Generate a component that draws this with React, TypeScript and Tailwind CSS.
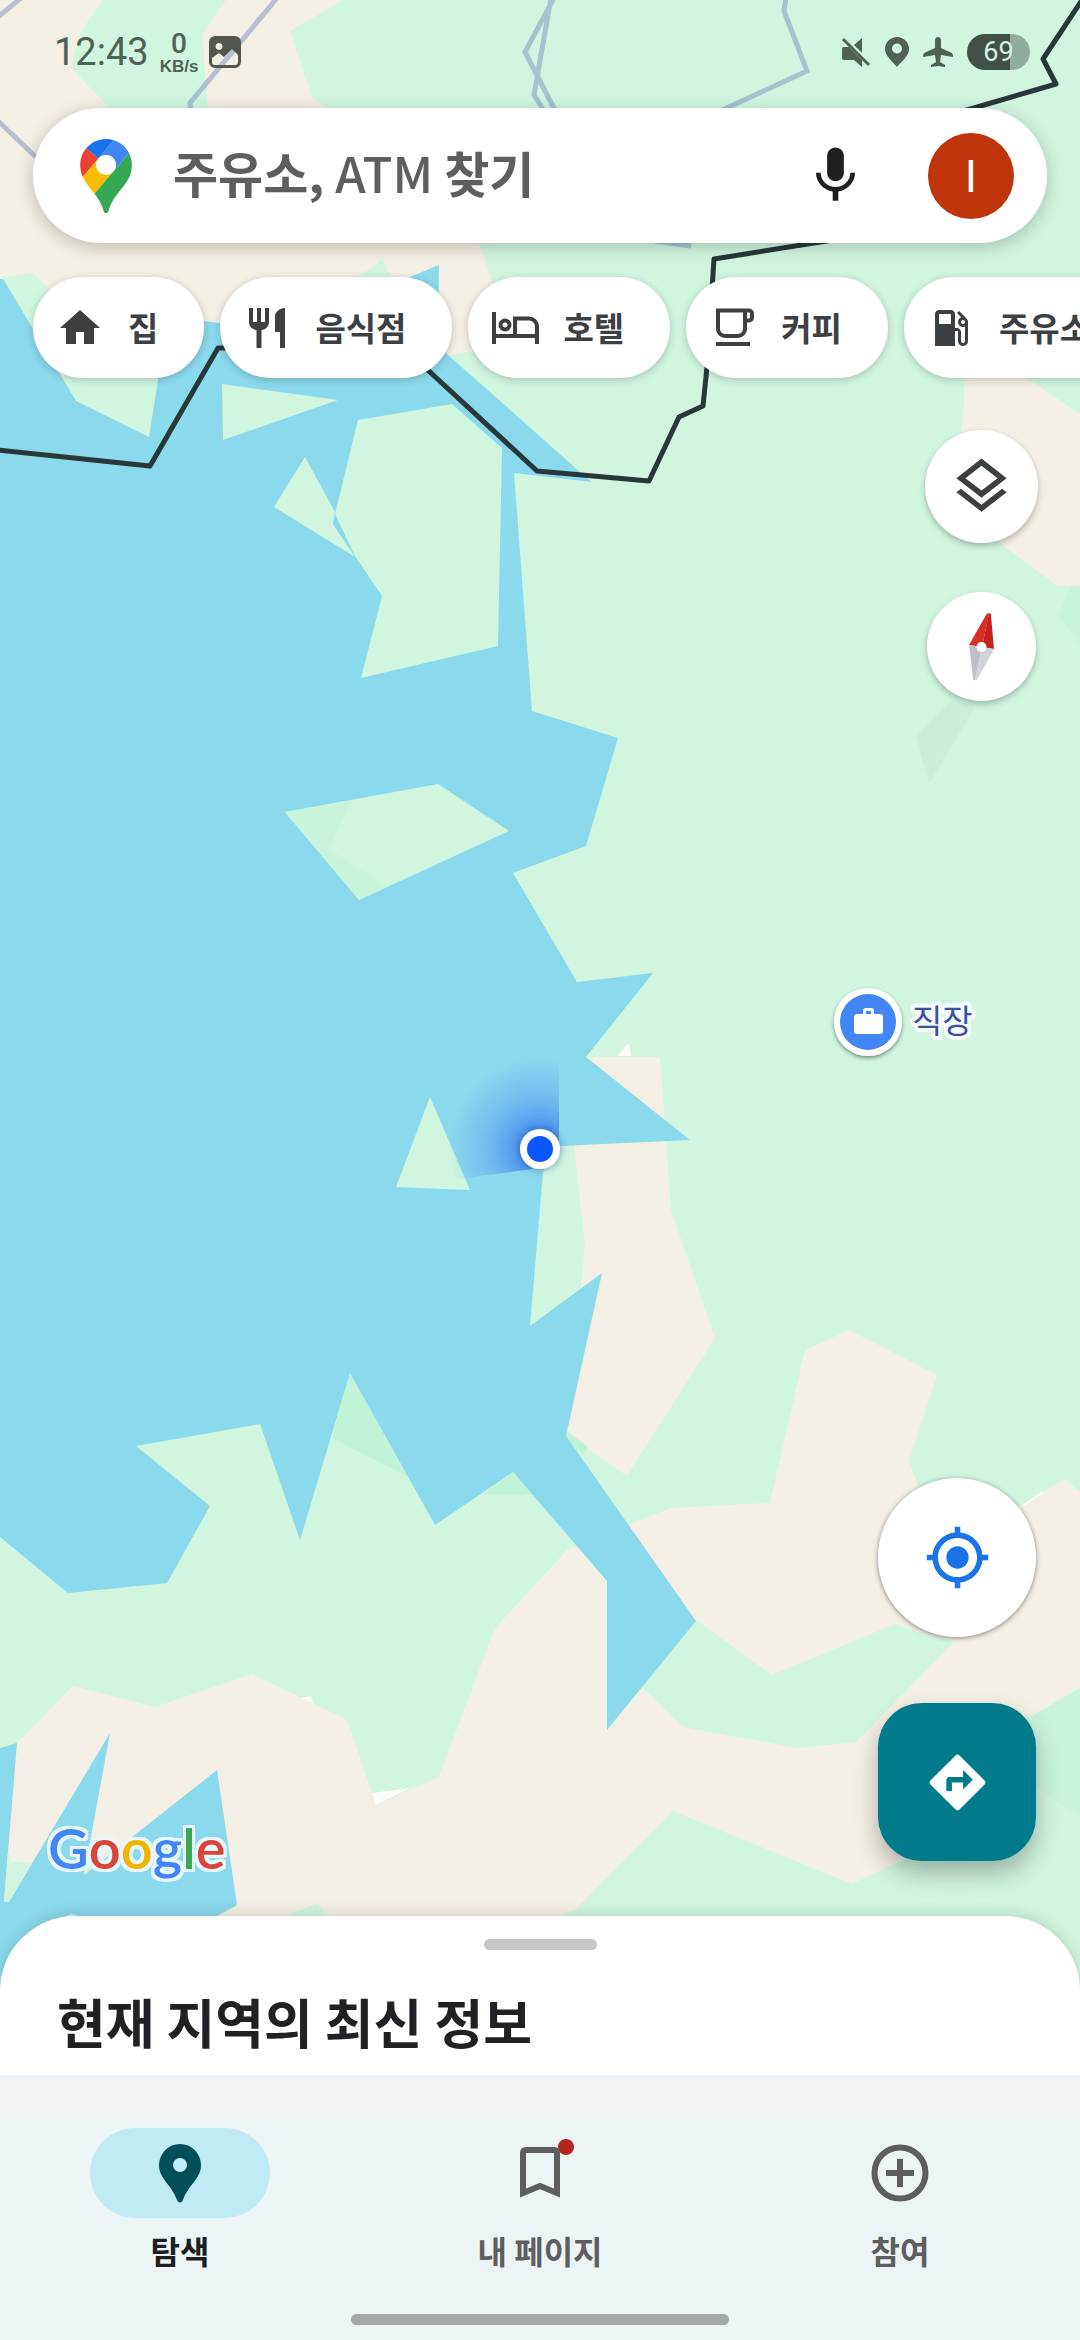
import type { ReactNode } from 'react';

const KR = "font-['Noto_Sans_CJK_KR',sans-serif]";

const C = {
  green: '#d0f6e0',
  beige: '#f4efe4',
  water: '#8bd9ec',
  deep: '#c1f3d6',
  mid: '#c8f4dc',
};

function MapCanvas() {
  return (
    <svg
      aria-hidden="true"
      className="absolute inset-0 -z-10 h-full w-full"
      viewBox="0 0 1080 2340"
      preserveAspectRatio="xMidYMin slice"
    >
      <defs>
        <radialGradient id="heading" gradientUnits="userSpaceOnUse" cx="540" cy="1149" r="92">
          <stop offset="0.15" stopColor="#2f74ee" stopOpacity="0.8" />
          <stop offset="0.5" stopColor="#3f86f3" stopOpacity="0.42" />
          <stop offset="1" stopColor="#4a90f5" stopOpacity="0" />
        </radialGradient>
        <filter id="pinShadow" x="-40%" y="-40%" width="180%" height="180%">
          <feDropShadow dx="0" dy="2" stdDeviation="2" floodColor="#000" floodOpacity="0.45" />
        </filter>
        <filter id="dotShadow" x="-60%" y="-60%" width="220%" height="220%">
          <feDropShadow dx="0" dy="0" stdDeviation="4" floodColor="#1a3f8a" floodOpacity="0.6" />
        </filter>
      </defs>
      <rect width="1080" height="2340" fill={C.green} />

      {/* bare land */}
      <g fill={C.beige}>
        <path d="M0 0H343L290 31 312 97 327 108 479 243 491 277 508 345 451 355 300 400H0Z" />
        <path d="M965 376 970 345 1000 360 1080 414V586H1058L1001 544 962 430Z" />
        <path d="M560 1057H660L671 1210 715 1338 627 1476 566 1434 581 1286 585 1245 574 1146Z" />
        <path d="M0 1760 17 1743 73 1686 155 1707 252 1674 347 1720 376 1805 439 1777 495 1628 567 1550 577 1547 630 1524 671 1508 770 1503 805 1350 849 1330 937 1375 909 1461 918 1485 960 1540 1022 1505 1065 1479 1080 1492V1688L1027 1719 980 1750 960 1825 902 1860 852 1884 673 1811 574 1911 557 1916 550 1960H0Z" />
      </g>
      <g fill={C.green}>
        <path d="M102 0H226L202 35 208 108V140H140L110 108 71 68 79 35Z" />
        <path d="M340 290 382 260 396 285Z" />
        <path d="M696 1620 772 1675 895 1624 915 1631 954 1642 856 1742 798 1748 683 1727 635 1680Z" />
        <path d="M280 1918 318 1903 328 1918Z" />
      </g>
      <g fill={C.deep}>
        <path d="M350 1373 332 1438 407 1476Z" />
        <path d="M566 1430 588 1447 583 1455 566 1440Z" />
        <path d="M1080 1688 1020 1723 1020 1775 1080 1818Z" fill={C.mid} />
        <path d="M1072 586H1080V644L1058 615Z" fill={C.mid} />
        <path d="M953 698 916 736 929 784 975 707Z" fill="#caf0dc" />
      </g>
      <g fill="#fcfcfa">
        <path d="M617 1056 629 1043 631 1056Z" />
        <path d="M372 1793 410 1788 376 1805Z" />
        <path d="M301 1698 311 1696 313 1703Z" />
        <path d="M1022 1505 1043 1491 1042 1494 1023 1507Z" />
      </g>

      {/* sea */}
      <g fill={C.water}>
        <path d="M0 279H3L60 322H165L203 321 220 323 340 300 410 277 439 265 438 343 448 355 499 400 581 473 592 482 514 473 532 711 618 738 586 846 513 873 577 982 653 973 586 1057 690 1140 560 1146 543 1172 530 1326 602 1273 566 1436 611 1500 696 1621 607 1730V1581L513 1472 435 1525 350 1373 300 1540 260 1424 136 1446 210 1506 167 1583 68 1593 0 1537Z" />
        <path d="M0 1748 17 1743 4 1901 9 1902 110 1733 84 1875 217 1770 237 1905 217 1916 200 2000H0Z" />
      </g>
      <path d="M513 1472 484 1494 532 1495Z" fill={C.deep} />

      {/* islands */}
      <g fill={C.green}>
        <path d="M2 277 33 273 60 300 165 310 158 380 149 437 76 401Z" />
        <path d="M222 384 338 400 223 440Z" />
        <path d="M358 420 452 404 502 448 498 646 361 678 382 596 355 556 335 514Z" />
        <path d="M305 457 335 512 333 524 355 557 274 507Z" />
        <path d="M285 812 438 784 509 831 359 900Z" />
        <path d="M430 1097 470 1190 396 1187Z" />
        <path d="M8 1852 11 1862H32L9 1902H4Z" />
        <path d="M84 1875 87 1858 100 1862Z" />
        <path d="M60 1918 72 1914 83 1918Z" />
      </g>
      {/* coast hidden behind the chips */}
      <path d="M60 290H165L165 322H82Z" fill={C.beige} />
      <path d="M204 312H236V321L204 321Z" fill={C.beige} />
      <path d="M285 812 352 800 329 849 387 887 359 900Z" fill={C.mid} />

      {/* borders */}
      <g fill="none" stroke="#7b8fc0" strokeOpacity="0.5" strokeWidth="5">
        <path d="M-2 17 21 -2M-2 121 36 157M277 -2 190 103 192 125" />
        <path d="M554 -2 525 52 560 120M551 -2 534 95 550 120M786 -2 784 11 807 71 716 113M655 241 691 246" />
      </g>
      <g fill="none" stroke="#27373a" strokeWidth="5" strokeLinejoin="round">
        <path d="M-2 450 150 466 218 348H404L537 471 649 481 679 417 703 406 707 367 714 259 833 240" />
        <path d="M960 112 1056 84 1043 59 1082 0" />
      </g>

      {/* current position */}
      <path d="M559 1050V1149L532 1169 450 1180 430 1050Z" fill="url(#heading)" />
      <circle cx="540" cy="1149" r="20" fill="#fff" filter="url(#dotShadow)" />
      <circle cx="540" cy="1149" r="13" fill="#0b57ff" />

      {/* work place */}
      <circle cx="868" cy="1022" r="34" fill="#fff" filter="url(#pinShadow)" />
      <circle cx="868" cy="1022" r="28" fill="#4285f4" />
      <path
        fill="#fff"
        fillRule="evenodd"
        d="M857 1014h6v-3q0-3 3-3h5q3 0 3 3v3h6q3 0 3 3v14q0 3-3 3h-23q-3 0-3-3v-14q0-3 3-3ZM866 1014h5v-3h-5Z"
      />
      <text
        x="912"
        y="1033"
        fontSize="33"
        fontWeight="400"
        fill="#3a50a0"
        stroke="#f3fbff"
        strokeWidth="8"
        strokeLinejoin="round"
        paintOrder="stroke"
        className={KR}
      >
        직장
      </text>
    </svg>
  );
}

function StatusBar() {
  return (
    <div className="flex h-[108px] items-center justify-between pr-[50px] pb-1 pl-[54px] text-[#4f6256]">
      <div className="flex items-center gap-[11px]">
        <span className="font-[Roboto] text-[38px] leading-[40px]">12:43</span>
        <span className="flex flex-col items-center">
          <span className="font-[Roboto] text-[28px] leading-[28px] font-medium">0</span>
          <span className="font-['Liberation_Sans'] text-[17px] leading-[17px] font-bold">KB/s</span>
        </span>
        <svg className="h-8 w-8" viewBox="0 0 32 32" fill="#545650" aria-hidden="true">
          <path
            fillRule="evenodd"
            d="M6 0h20a6 6 0 0 1 6 6v20a6 6 0 0 1-6 6H6a6 6 0 0 1-6-6V6a6 6 0 0 1 6-6ZM10 7a3.500 3.500 0 1 0 0.010 0ZM3 22v4a3 3 0 0 0 3 3h20a3 3 0 0 0 3-3v-7l-6-6-8 8-5-4Z"
          />
        </svg>
      </div>
      <div className="flex items-center gap-[13px]">
        <svg className="h-8 w-8" viewBox="0 0 32 32" fill="currentColor" aria-hidden="true">
          <path d="M4 11h5l13 13v7l-8-7H4q-2 0-2-2v-9q0-2 2-2ZM22 2v15l-8-8Z" />
          <path d="M3 3l26 26" stroke="currentColor" strokeWidth="3" />
        </svg>
        <svg className="h-8 w-6" viewBox="0 0 24 32" fill="currentColor" aria-hidden="true">
          <path fillRule="evenodd" d="M12 1a12 12 0 0 1 12 12c0 7-8 13-12 18C8 26 0 20 0 13A12 12 0 0 1 12 1Zm0 6.500a5 5 0 1 0 .010 0Z" />
        </svg>
        <svg className="h-8 w-8" viewBox="0 0 32 32" fill="currentColor" aria-hidden="true">
          <path d="M16 1q3 0 3 4v7l11 5q1 1 1 4l-12-2-1 7 5 3v2l-7-1-7 1v-2l5-3-1-7-12 2q0-3 1-4l11-5V5q0-4 3-4Z" />
        </svg>
        <span className="flex h-9 w-[63px] items-center justify-center rounded-full bg-[linear-gradient(90deg,#425048_68%,#90ae9f_68%)] font-[Roboto] text-[27px] leading-none text-[#d5f3e2]">
          69
        </span>
      </div>
    </div>
  );
}

function SearchBar() {
  return (
    <div className="mx-[33px] flex h-[135px] items-center rounded-full bg-white pr-[33px] pl-[47px] shadow-[0_4px_18px_rgba(0,0,0,0.22)]">
      <svg className="h-[74px] w-[52px]" viewBox="0 0 92.3 132.3" aria-hidden="true">
        <path fill="#1a73e8" d="M60.2 2.2C55.8.8 51 0 46.1 0 32 0 19.3 6.4 10.8 16.5l21.8 18.3L60.2 2.2z" />
        <path fill="#ea4335" d="M10.8 16.5C4.1 24.5 0 34.9 0 46.1c0 8.7 1.7 15.7 4.6 22l28-33.3-21.800-18.300z" />
        <path fill="#4285f4" d="M46.2 28.500c9.800 0 17.700 7.900 17.700 17.700 0 4.300-1.600 8.300-4.200 11.400 0 0 13.900-16.600 27.500-32.700-5.600-10.800-15.300-19-27-22.700L32.600 34.800c3.300-3.800 8.100-6.300 13.600-6.300" />
        <path fill="#fbbc04" d="M46.2 63.800c-9.800 0-17.700-7.900-17.700-17.700 0-4.300 1.500-8.300 4.100-11.300l-28 33.300c4.800 10.600 12.800 19.200 21 29.900l34.100-40.500c-3.300 3.900-8.100 6.300-13.500 6.300" />
        <path fill="#34a853" d="M59.100 109.200c15.400-24.100 33.300-35 33.300-63 0-7.700-1.900-14.900-5.200-21.300L25.600 98c2.600 3.400 5.300 7.300 7.900 11.300 9.400 14.500 6.800 23.100 12.800 23.100s3.400-8.700 12.800-23.200" />
        <circle cx="46.200" cy="46.200" r="17.700" fill="#fff" />
      </svg>
      <div className={`relative ml-[41px] flex h-full flex-1 items-center pb-2 ${KR}`}>
        <label htmlFor="search" className="text-[49px] leading-none font-bold whitespace-nowrap text-[#5e5e5e]">
          주유소, <span className="font-medium">ATM</span> 찾기
        </label>
        <input id="search" type="text" className="absolute inset-0 bg-transparent text-[49px] outline-none" />
      </div>
      <button type="button" aria-label="음성 검색">
        <svg className="h-[67px] w-[67px]" viewBox="0 0 24 24" fill="#1f1f1f">
          <path d="M12 14c1.660 0 3-1.340 3-3V5c0-1.660-1.340-3-3-3S9 3.340 9 5v6c0 1.660 1.340 3 3 3z" />
          <path d="M17.300 11c0 3-2.540 5.100-5.300 5.100S6.700 14 6.700 11H5c0 3.410 2.720 6.230 6 6.720V21h2v-3.280c3.280-.480 6-3.300 6-6.720h-1.700z" />
        </svg>
      </button>
      <button
        type="button"
        aria-label="계정"
        className="ml-[59px] h-[86px] w-[86px] rounded-full bg-[#be350b] font-['Liberation_Sans'] text-[46px] leading-none text-white"
      >
        I
      </button>
    </div>
  );
}

const chips: { label: string; icon: ReactNode }[] = [
  { label: '집', icon: <path d="M20 40V28h8v12h10V24h6L24 6 4 24h6v16z" /> },
  {
    label: '음식점',
    icon: (
      <path d="M22 18h-4V4h-4v14h-4V4H6v14c0 4.240 3.320 7.680 7.500 7.940V44h5V25.940C22.680 25.680 26 22.240 26 18V4h-4v14zm10-6v16h5v16h5V4c-5.500 0-10 4.480-10 8z" />
    ),
  },
  {
    label: '호텔',
    icon: (
      <g fill="none" stroke="currentColor" strokeWidth="4">
        <path d="M3 8v32M3 32h43M24 32V14.500h14a8 8 0 0 1 8 8V40" />
        <circle cx="14" cy="21" r="4.500" />
      </g>
    ),
  },
  {
    label: '커피',
    icon: (
      <g fill="none" stroke="currentColor" strokeWidth="4">
        <path d="M9 6.500H36V25a7 7 0 0 1-7 7H16a7 7 0 0 1-7-7ZM36 6.500h4a3 3 0 0 1 3 3v4a3 3 0 0 1-3 3h-4M7 40h34" />
      </g>
    ),
  },
  {
    label: '주유소',
    icon: (
      <path d="M39.540 14.460l.020-.020-7.440-7.440L30 9.120l4.220 4.220c-1.880.720-3.220 2.520-3.220 4.660 0 2.760 2.240 5 5 5 .720 0 1.380-.160 2-.420v14.420c0 1.100-.900 2-2 2s-2-.900-2-2V28c0-2.200-1.800-4-4-4h-2V10c0-2.200-1.800-4-4-4H12c-2.200 0-4 1.800-4 4v32h20V27h3v10c0 2.760 2.240 5 5 5s5-2.240 5-5V18c0-1.380-.560-2.640-1.460-3.540zM24 20H12V10h12v10zm12 0c-1.100 0-2-.900-2-2s.900-2 2-2 2 .900 2 2-.900 2-2 2z" />
    ),
  },
];

function Chips() {
  return (
    <div className="mt-[34px] ml-[33px] flex gap-4">
      {chips.map((c) => (
        <button
          key={c.label}
          type="button"
          className={`flex h-[101px] shrink-0 items-center gap-6 rounded-full bg-white pr-[46px] pl-[23px] text-[33px] leading-none font-bold text-[#3c4043] shadow-[0_2px_8px_rgba(0,0,0,0.2)] ${KR}`}
        >
          <svg className="h-12 w-12" viewBox="0 0 48 48" fill="currentColor" aria-hidden="true">
            {c.icon}
          </svg>
          {c.label}
        </button>
      ))}
    </div>
  );
}

function MapTools() {
  return (
    <div className="mt-[52px] mr-[42px] flex flex-col items-center gap-[49px] self-end">
      <button
        type="button"
        aria-label="지도 유형"
        className="flex h-[113px] w-[113px] items-center justify-center rounded-full bg-white shadow-[0_3px_6px_rgba(0,0,0,0.25)]"
      >
        <svg className="h-[67px] w-[67px]" viewBox="0 0 24 24" fill="#3c4043">
          <path d="M11.990 18.540l-7.370-5.730L3 14.070l9 7 9-7-1.630-1.270zM12 16l7.360-5.730L21 9l-9-7-9 7 1.630 1.270L12 16zm0-11.470L17.740 9 12 13.470 6.260 9 12 4.530z" />
        </svg>
      </button>
      <button
        type="button"
        aria-label="나침반"
        className="flex h-[109px] w-[109px] items-center justify-center rounded-full bg-white shadow-[0_3px_6px_rgba(0,0,0,0.25)]"
      >
        <svg className="h-[72px] w-[72px]" viewBox="0 0 72 72">
          <path fill="#d93025" d="M23 34 40 4q2-3 3-1L36 36Z" />
          <path fill="#c5221f" d="M43 2q2 0 2 3L48 38 36 36Z" />
          <path fill="#bdc1c6" d="M23 34 27 67q0 3 2 2L36 36Z" />
          <path fill="#d2d3da" d="M48 38 32 67q-1 3-3 2L36 36Z" />
          <circle cx="35.500" cy="36" r="5" fill="#fff" />
        </svg>
      </button>
    </div>
  );
}

function MapActions() {
  return (
    <div className="flex items-end justify-between pr-[44px] pb-[33px] pl-[48px]">
      <div
        aria-label="Google"
        className="flex font-[Lato] text-[56px] leading-[70px] font-semibold [filter:drop-shadow(3px_0_0_#e8f7fd)_drop-shadow(-3px_0_0_#e8f7fd)_drop-shadow(0_3px_0_#e8f7fd)_drop-shadow(0_-3px_0_#e8f7fd)]"
      >
        <span className="text-[#4285f4]">G</span>
        <span className="text-[#db4437]">o</span>
        <span className="text-[#f4b400]">o</span>
        <span className="text-[#4285f4]">g</span>
        <span className="text-[#3da854]">l</span>
        <span className="text-[#db4437]">e</span>
      </div>
      <div className="flex flex-col gap-[66px] pb-[22px]">
        <button
          type="button"
          aria-label="내 위치"
          className="flex h-[159px] w-[158px] items-center justify-center rounded-full bg-white shadow-[0_1px_5px_rgba(0,0,0,0.45)]"
        >
          <svg className="h-[67px] w-[67px]" viewBox="0 0 24 24" fill="#1a73e8">
            <path d="M12 8c-2.210 0-4 1.790-4 4s1.790 4 4 4 4-1.790 4-4-1.790-4-4-4zm8.940 3A8.994 8.994 0 0 0 13 3.060V1h-2v2.060A8.994 8.994 0 0 0 3.060 11H1v2h2.060A8.994 8.994 0 0 0 11 20.940V23h2v-2.060A8.994 8.994 0 0 0 20.940 13H23v-2h-2.060zM12 19c-3.870 0-7-3.130-7-7s3.130-7 7-7 7 3.130 7 7-3.130 7-7 7z" />
          </svg>
        </button>
        <button
          type="button"
          aria-label="경로"
          className="flex h-[158px] w-[158px] items-center justify-center rounded-[44px] bg-[#007b8b] shadow-[0_12px_24px_rgba(0,0,0,0.28)]"
        >
          <svg className="h-[67px] w-[67px]" viewBox="0 0 24 24" fill="#fff">
            <path d="M21.710 11.290l-9-9c-.390-.390-1.020-.390-1.410 0l-9 9c-.390.390-.390 1.020 0 1.410l9 9c.390.390 1.020.390 1.410 0l9-9c.390-.380.390-1.010 0-1.410zM14 14.500V12h-4v3H8v-4c0-.550.450-1 1-1h5V7.500l3.500 3.500-3.500 3.500z" />
          </svg>
        </button>
      </div>
    </div>
  );
}

const tabs: { label: string; icon: ReactNode; active?: boolean; badge?: boolean }[] = [
  {
    label: '탐색',
    active: true,
    icon: (
      <path
        fill="currentColor"
        fillRule="evenodd"
        d="M34 5a21 21 0 0 1 21 21c0 14-13 20-18 35q-3 5-6 0C26 46 13 40 13 26A21 21 0 0 1 34 5Zm0 14a7 7 0 1 0 .010 0Z"
      />
    ),
  },
  {
    label: '내 페이지',
    badge: true,
    icon: <path fill="none" stroke="currentColor" strokeWidth="6" d="M17 54V14q0-3 3-3h28q3 0 3 3v40L34 47Z" />,
  },
  {
    label: '참여',
    icon: (
      <g fill="none" stroke="currentColor" strokeWidth="6">
        <circle cx="34" cy="34" r="25.500" />
        <path d="M34 20v28M20 34h28" />
      </g>
    ),
  },
];

function BottomNav() {
  return (
    <nav className="flex flex-col bg-[linear-gradient(180deg,#f0f3f5_43px,#edf4f6_43px)] pt-[53px] pb-[15px]">
      <div className="grid grid-cols-3">
        {tabs.map((t) => (
          <button
            key={t.label}
            type="button"
            className={`flex flex-col items-center gap-2 text-[32px] leading-[48px] font-bold ${KR} ${
              t.active ? 'text-[#1f1f1f]' : 'text-[#5e5e5e]'
            }`}
          >
            <span
              className={`relative flex h-[90px] w-[180px] items-center justify-center rounded-full ${
                t.active ? 'bg-[#c1ebf4] text-[#004f58]' : ''
              }`}
            >
              <svg className="h-[68px] w-[68px]" viewBox="0 0 68 68" aria-hidden="true">
                {t.icon}
              </svg>
              {t.badge && <span className="absolute top-[11px] left-[108px] h-4 w-4 rounded-full bg-[#b3261e]" />}
            </span>
            {t.label}
          </button>
        ))}
      </div>
      <div className="mt-10 h-[11px] w-[378px] self-center rounded-full bg-[#a5a9a9]" />
    </nav>
  );
}

export default function App() {
  return (
    <div className="relative isolate flex min-h-screen flex-col overflow-hidden">
      <MapCanvas />
      <StatusBar />
      <SearchBar />
      <Chips />
      <MapTools />
      <div className="flex-1" />
      <MapActions />
      <section className="flex flex-col rounded-t-[75px] bg-white pt-[23px] pb-[18px] shadow-[0_-3px_14px_rgba(0,0,0,0.12)]">
        <div className="h-[11px] w-[113px] self-center rounded-full bg-[#c7c7c7]" />
        <h2 className={`mt-[35px] ml-[57px] text-[53px] leading-[72px] font-bold text-[#202124] ${KR}`}>
          현재 지역의 최신 정보
        </h2>
      </section>
      <BottomNav />
    </div>
  );
}
